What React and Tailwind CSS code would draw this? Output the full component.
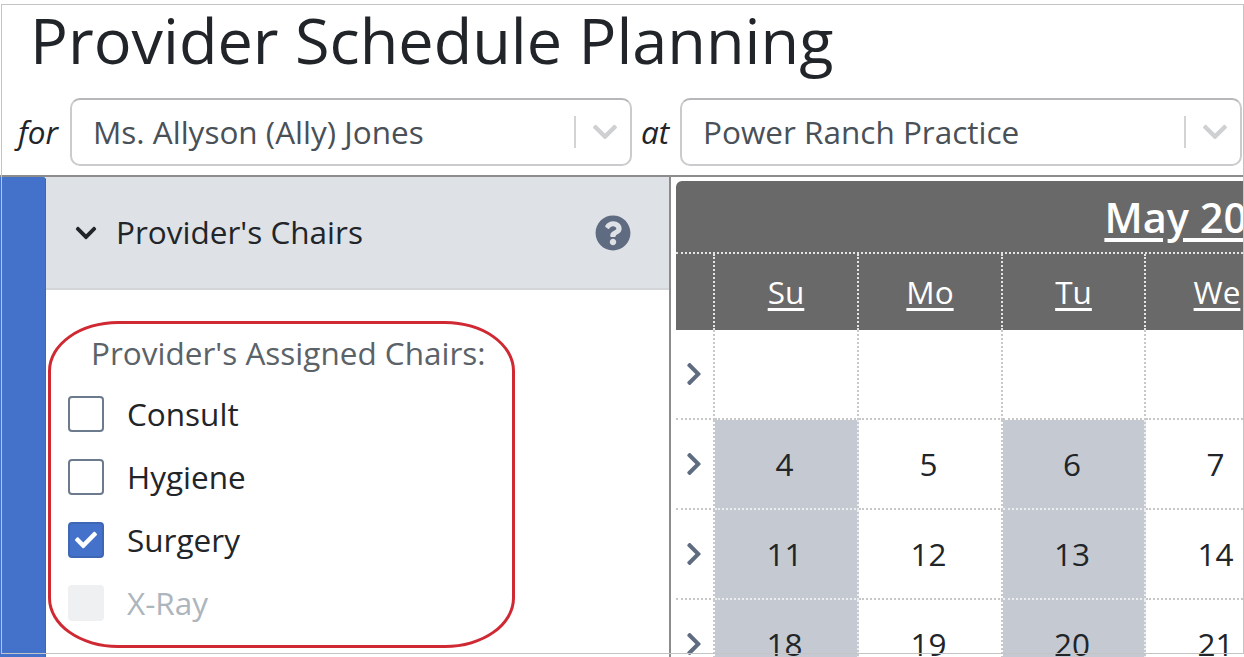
import { FaChevronDown, FaChevronRight, FaCheck, FaQuestionCircle } from 'react-icons/fa';

const rows = [
  ['', '', '', '', '1', '2', '3'],
  ['4', '5', '6', '7', '8', '9', '10'],
  ['11', '12', '13', '14', '15', '16', '17'],
  ['18', '19', '20', '21', '22', '23', '24'],
];
const days = ['Su', 'Mo', 'Tu', 'We', 'Th', 'Fr', 'Sa'];
const chairs = [
  { label: 'Consult', state: 'off' },
  { label: 'Hygiene', state: 'off' },
  { label: 'Surgery', state: 'on' },
  { label: 'X-Ray', state: 'disabled' },
];

const Select = ({ value }) => (
  <div className="flex items-center h-[68px] w-[562px] shrink-0 bg-white rounded-[10px] border-2 border-[#c9cbcd] border-t-[#b5b7b9] pl-[21px]">
    <span className="flex-1 text-[31.5px] text-[#495057] leading-none whitespace-nowrap">{value}</span>
    <span className="w-[2px] h-8 bg-[#d2d3d5]" />
    <FaChevronDown className="w-7 h-7 ml-[15px] mr-[11px] text-[#cfd0d2]" />
  </div>
);

const Chair = ({ label, state }) => (
  <div className="flex items-center h-[63px] pl-[17px]">
    {state === 'off' && <span className="w-9 h-9 rounded-[4px] border-2 border-[#6c7a8d] bg-white" />}
    {state === 'on' && (
      <span className="w-9 h-9 rounded-[4px] border-2 border-[#3f65b5] bg-[#4472ca] flex items-center justify-center">
        <FaCheck className="w-[22px] h-[22px] text-white" />
      </span>
    )}
    {state === 'disabled' && <span className="w-9 h-9 rounded-[4px] bg-[#eef0f2]" />}
    <span className={`ml-[23px] text-[31.5px] leading-none ${state === 'disabled' ? 'text-[#adb5bd]' : 'text-[#212529]'}`}>{label}</span>
  </div>
);

export default function App() {
  return (
    <div className="relative w-[1244px] h-[657px] overflow-hidden bg-white font-['Open_Sans',sans-serif]">
      {/* thin frame of the captured window */}
      <div className="absolute left-[1px] top-[4px] w-[1243px] h-[650px] border border-[#c4c4c4] pointer-events-none z-10" />

      <div className="h-[95px] pl-[30px] pt-[1px]">
        <h1 className="text-[63px] leading-[78px] text-[#212529] whitespace-nowrap">Provider Schedule Planning</h1>
      </div>

      <div className="flex items-center h-[70px] mt-[2px] pl-[18px]">
        <span className="w-[52px] text-[31.5px] italic text-[#212529] leading-none">for</span>
        <Select value="Ms. Allyson (Ally) Jones" />
        <span className="w-[48px] pl-[9px] text-[31.5px] italic text-[#212529] leading-none">at</span>
        <Select value="Power Ranch Practice" />
      </div>

      <div className="flex mt-[8px] border-t-2 border-[#8c8c8c] h-[482px]">
        <div className="w-[46px] shrink-0 bg-[#4472ca] rounded-tr-[3px] border-r border-[#3f65b5]" />

        <div className="w-[625px] shrink-0 border-r-2 border-[#8c8c8c]">
          <div className="flex items-center h-[113px] bg-[#dee1e6] border-b-2 border-[#d3d5d8] pl-[28px] pr-[38px]">
            <FaChevronDown className="w-6 h-6 text-[#212529]" />
            <span className="flex-1 ml-[18px] pb-[2px] text-[31.5px] text-[#212529] leading-none">Provider's Chairs</span>
            <FaQuestionCircle className="w-9 h-9 text-[#5f6b80]" />
          </div>

          <div className="ml-[2px] mt-[31px] w-[467px] h-[327px] border-[3px] border-[#cf2a33] rounded-[70px/50px]">
            <div className="pl-[40px] pt-[9px] h-[58px] text-[31.5px] leading-[40px] text-[#5b6268] whitespace-nowrap">Provider's Assigned Chairs:</div>
            {chairs.map((chair) => (
              <Chair key={chair.label} label={chair.label} state={chair.state} />
            ))}
          </div>
        </div>

        <div className="flex-1 min-w-0 ml-[5px] mt-[4px] overflow-hidden">
          <div className="w-[1047px] h-[73px] pt-[2px] bg-[#696969] rounded-tl-[6px] flex items-center justify-center border-b-2 border-dotted border-[#e4e4e4]">
            <span className="text-[41.5px] font-semibold text-white underline underline-offset-[5px] leading-none">May 2025</span>
          </div>

          <div className="grid grid-cols-[39px_144px_144px_143px_144px_144px_144px_145px] w-[1047px]">
            <div className="h-[76px] bg-[#696969] border-r-2 border-dotted border-[#e4e4e4]" />
            {days.map((day) => (
              <div key={day} className="h-[76px] bg-[#696969] border-r-2 border-dotted border-[#e4e4e4] flex items-center justify-center">
                <span className="text-[31.5px] text-white underline underline-offset-[4px] leading-none">{day}</span>
              </div>
            ))}

            {rows.map((week, i) => (
              <div key={i} className="contents">
                <div className="h-[90px] flex items-center justify-center border-r-2 border-b-2 border-dotted border-[#c8c8c8]">
                  <FaChevronRight className="w-[26px] h-[26px] -ml-[2px] text-[#5f6b80]" />
                </div>
                {week.map((date, j) => (
                  <div
                    key={j}
                    className={`h-[90px] pr-[3px] flex items-center justify-center text-[31.5px] font-medium text-[#212529] border-r-2 border-b-2 border-dotted ${
                      i > 0 && j % 2 === 0 ? 'bg-[#c5cad2] border-[#eceef0]' : 'border-[#c8c8c8]'
                    }`}
                  >
                    {date}
                  </div>
                ))}
              </div>
            ))}
          </div>
        </div>
      </div>
    </div>
  );
}
